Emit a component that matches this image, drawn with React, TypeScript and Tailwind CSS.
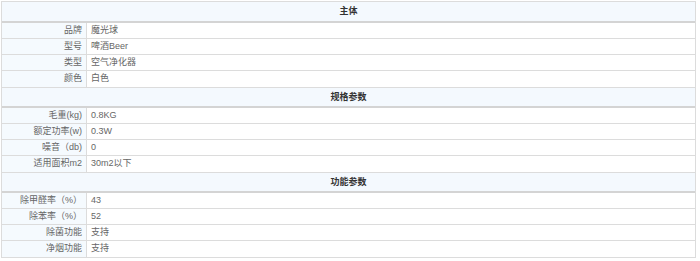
import React from 'react';

type Group = { title: string; rows: [string, string][] };

const groups: Group[] = [
    {
        title: '主体',
        rows: [
            ['品牌', '魔光球'],
            ['型号', '啤酒Beer'],
            ['类型', '空气净化器'],
            ['颜色', '白色'],
        ],
    },
    {
        title: '规格参数',
        rows: [
            ['毛重(kg)', '0.8KG'],
            ['额定功率(w)', '0.3W'],
            ['噪音（db)', '0'],
            ['适用面积m2', '30m2以下'],
        ],
    },
    {
        title: '功能参数',
        rows: [
            ['除甲醛率（%）', '43'],
            ['除苯率（%）', '52'],
            ['除菌功能', '支持'],
            ['净烟功能', '支持'],
        ],
    },
];

const App: React.FC = () => {
    return (
        <div className="w-[700px] h-[261px] bg-white pt-px pl-px">
            <div
                className="w-[695px] border border-[#dcdcdc] text-[9px] leading-[15px] text-[#666]"
                style={{ fontFamily: '"Liberation Sans", "Noto Sans CJK SC", sans-serif' }}
            >
                {groups.map((group, gi) => (
                    <div key={group.title}>
                        <div
                            className={`h-[21px] flex items-center justify-center bg-[#f4f9fe] border-b-2 border-[#d4d4d4] font-bold text-[#333] ${gi > 0 ? 'border-t border-t-[#dcdcdc]' : ''}`}
                        >
                            {group.title}
                        </div>
                        {group.rows.map(([label, value], ri) => (
                            <div
                                key={label}
                                className={`flex h-[16px] ${ri < group.rows.length - 1 ? 'border-b border-[#dcdcdc]' : ''}`}
                            >
                                <div className="w-[85px] shrink-0 bg-[#f5fafe] border-r border-[#dcdcdc] text-right pr-[4px] whitespace-nowrap">
                                    {label}
                                </div>
                                <div className="flex-1 pl-[4px] whitespace-nowrap">{value}</div>
                            </div>
                        ))}
                    </div>
                ))}
            </div>
        </div>
    );
};

export default App;
